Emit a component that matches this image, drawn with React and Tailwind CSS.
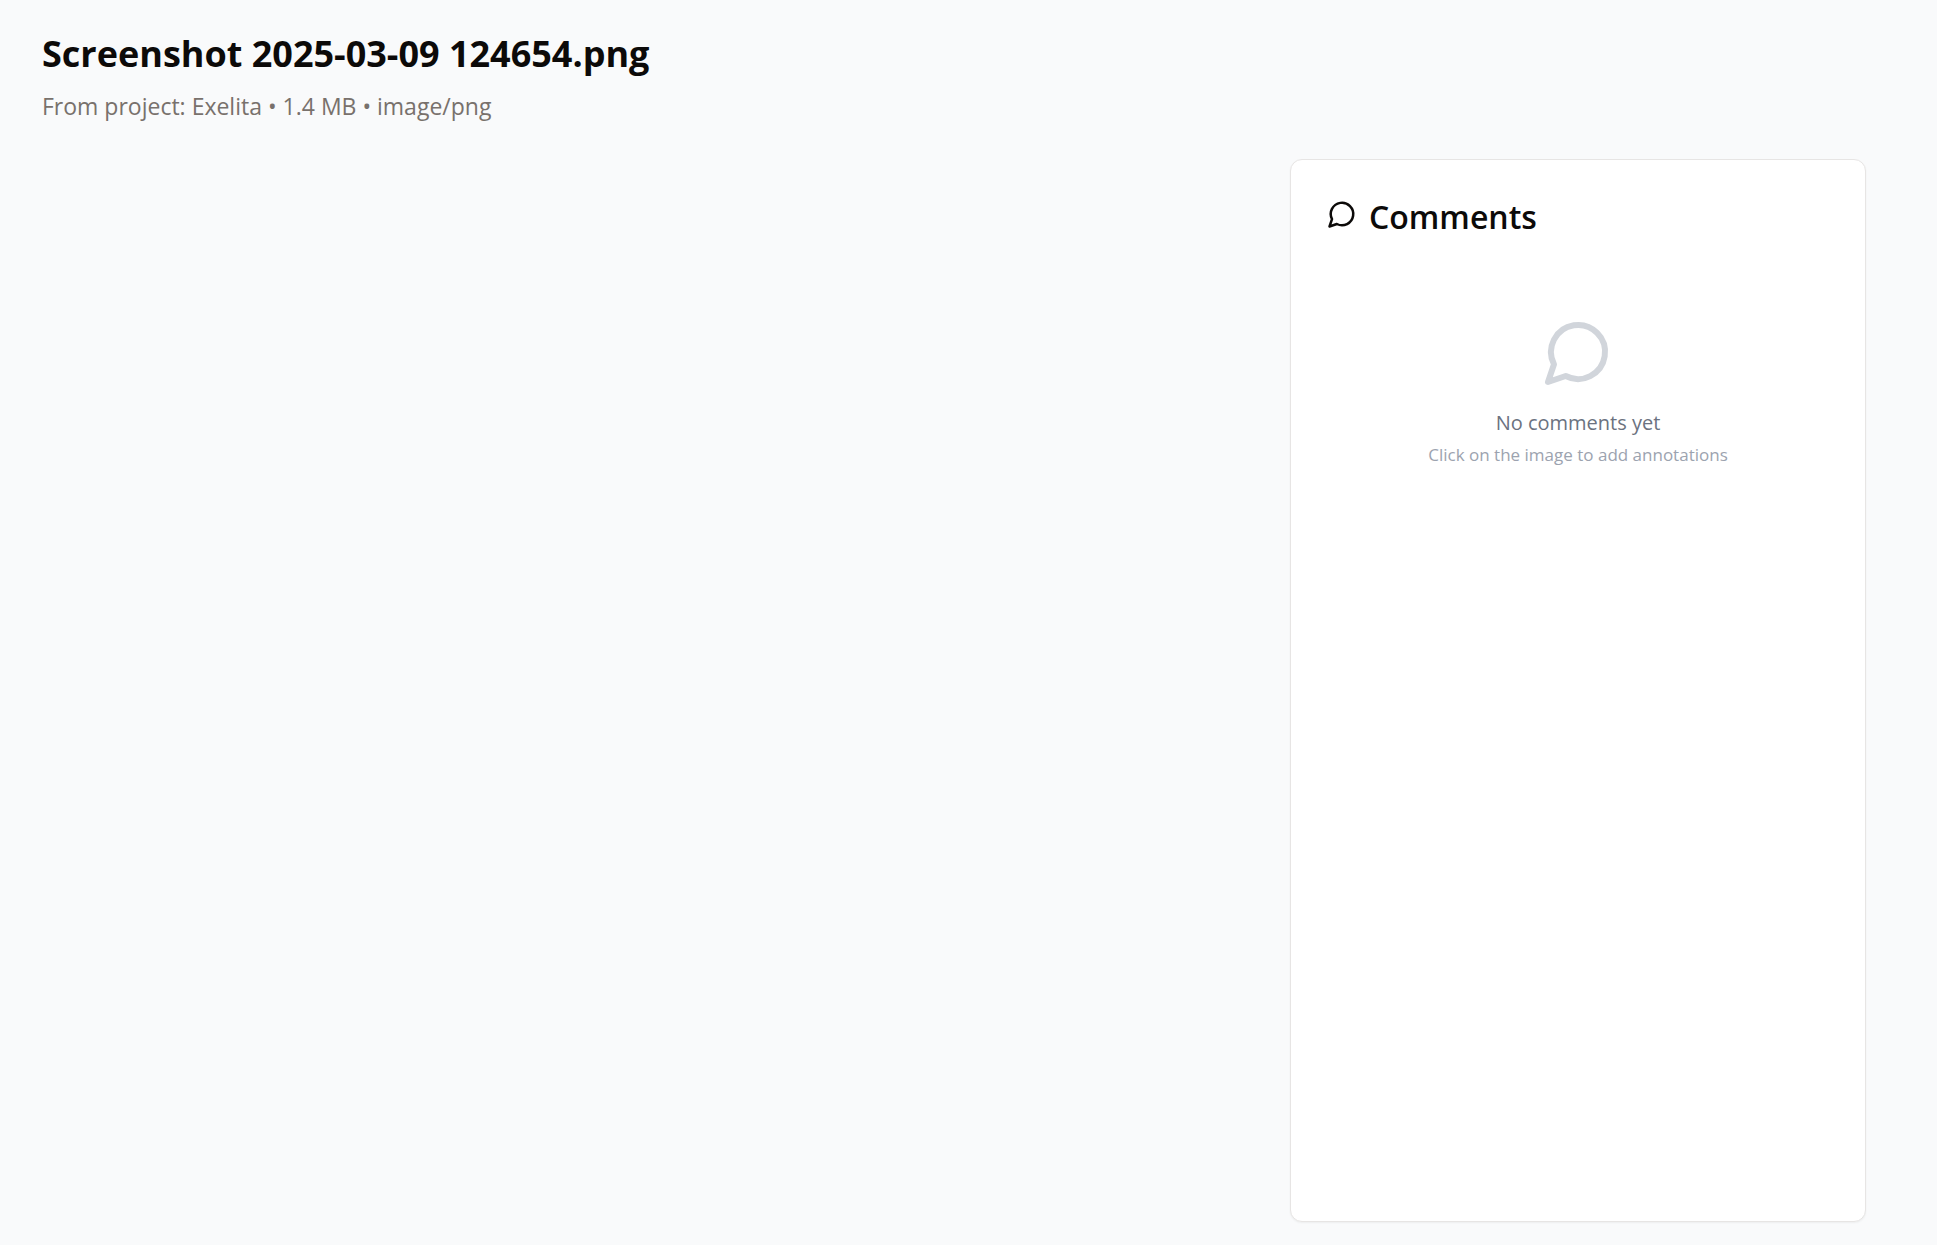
function MessageIcon({ className }) {
  return (
    <svg
      viewBox="0 0 24 24"
      fill="none"
      stroke="currentColor"
      strokeWidth="2"
      strokeLinecap="round"
      strokeLinejoin="round"
      aria-hidden="true"
      className={className}
    >
      <path d="M7.9 20A9 9 0 1 0 4 16.1L2 22Z" />
    </svg>
  );
}

export default function App() {
  return (
    <div className="flex min-h-screen flex-col bg-gray-50 pb-[23px] font-['Open_Sans','Noto_Sans',sans-serif] text-[#0c0a09]">
      <header className="px-[42px] pt-[30px]">
        <h1 className="text-[36px] leading-12 font-bold">Screenshot 2025-03-09 124654.png</h1>
        <p className="mt-2.5 text-[23px] leading-9 text-[#78716c]">From project: Exelita • 1.4 MB • image/png</p>
      </header>
      <main className="mt-[35px] grid flex-1 grid-cols-3 gap-9 pr-[71px] pl-[66px]">
        <section aria-label="Image preview" className="col-span-2" />
        <aside className="rounded-xl border border-[#e7e5e4] bg-white px-9 pt-[39px] pb-9 shadow-xs">
          <div className="flex items-start gap-3">
            <MessageIcon className="size-[30px] shrink-0" />
            <h2 className="text-[32px] leading-9 font-semibold">Comments</h2>
          </div>
          <div className="mt-[81px] flex flex-col items-center text-center">
            <MessageIcon className="size-[72px] text-[#d1d5db]" />
            <p className="mt-[17px] text-[20px] leading-9 text-[#6b7280]">No comments yet</p>
            <p className="text-[17px] leading-7 text-[#9ca3af]">Click on the image to add annotations</p>
          </div>
        </aside>
      </main>
    </div>
  );
}
